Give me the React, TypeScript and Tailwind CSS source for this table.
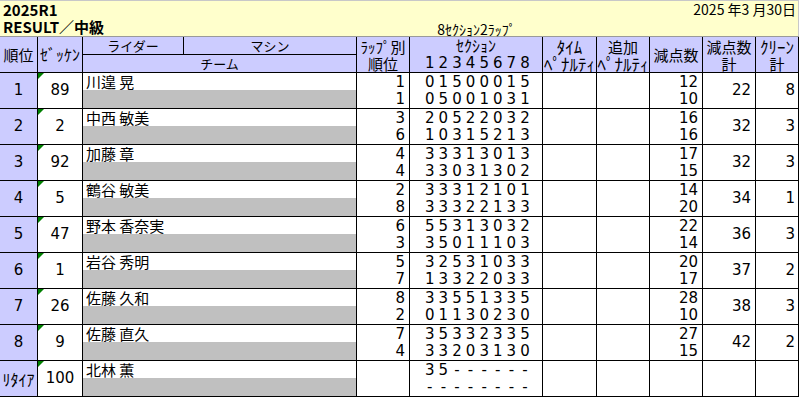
import React from "react";

// one grid template shared by the title, header and result rows
const COLS =
  "grid grid-cols-[38px_45px_101px_173px_53px_133px_54px_53px_53px_53px_43px]";
const JP = "font-['Noto_Sans_CJK_JP',sans-serif]";
const NUM = "font-['DejaVu_Sans','Noto_Sans_CJK_JP',sans-serif]";

interface Result {
  rank: string;
  no: string;
  name: string;
  laps: [string, string];
  sections: [string, string];
  points: [string, string];
  total: string;
  clean: string;
}

const results: Result[] = [
  { rank: "1", no: "89", name: "川遑 晃", laps: ["1", "1"], sections: ["01500015", "05001031"], points: ["12", "10"], total: "22", clean: "8" },
  { rank: "2", no: "2", name: "中西 敏美", laps: ["3", "6"], sections: ["20522032", "10315213"], points: ["16", "16"], total: "32", clean: "3" },
  { rank: "3", no: "92", name: "加藤 章", laps: ["4", "4"], sections: ["33313013", "33031302"], points: ["17", "15"], total: "32", clean: "3" },
  { rank: "4", no: "5", name: "鶴谷 敏美", laps: ["2", "8"], sections: ["33312101", "33322133"], points: ["14", "20"], total: "34", clean: "1" },
  { rank: "5", no: "47", name: "野本 香奈実", laps: ["6", "3"], sections: ["55313032", "35011103"], points: ["22", "14"], total: "36", clean: "3" },
  { rank: "6", no: "1", name: "岩谷 秀明", laps: ["5", "7"], sections: ["32531033", "13322033"], points: ["20", "17"], total: "37", clean: "2" },
  { rank: "7", no: "26", name: "佐藤 久和", laps: ["8", "2"], sections: ["33551335", "01130230"], points: ["28", "10"], total: "38", clean: "3" },
  { rank: "8", no: "9", name: "佐藤 直久", laps: ["7", "4"], sections: ["35332335", "33203130"], points: ["27", "15"], total: "42", clean: "2" },
  { rank: "ﾘﾀｲｱ", no: "100", name: "北林 薫", laps: ["", ""], sections: ["35------", "--------"], points: ["", ""], total: "", clean: "" },
];

const Digits = ({ value }: { value: string }) => (
  <div className="flex pl-[13px]">
    {value.split("").map((d, i) => (
      <span key={i} className="w-[13.6px] text-center">
        {d}
      </span>
    ))}
  </div>
);

const cell = "border-r border-b border-black";

// header cell; each line gets its own 18px slot and font size
const HeaderCell = ({
  pos,
  lines,
}: {
  pos: string;
  lines: [string, string][];
}) => (
  <div className={`${pos} ${cell} bg-[#ccccff] flex flex-col items-center justify-center`}>
    {lines.map(([text, size], i) => (
      <span key={i} className={`whitespace-nowrap h-[17px] leading-[17px] ${size}`}>
        {text}
      </span>
    ))}
  </div>
);

const Row = ({ r }: { r: Result }) => {
  const retired = r.rank === "ﾘﾀｲｱ";
  return (
    <div className={`${COLS} h-[36px]`}>
      <div
        className={`${cell} bg-[#ccccff] flex items-center justify-center ${
          retired ? `${JP} text-[16px]` : `${NUM} text-[15px]`
        }`}
      >
        {r.rank}
      </div>
      <div className={`${cell} relative flex items-center justify-center ${NUM} text-[15px]`}>
        <span className="absolute left-0 top-0 w-0 h-0 border-t-[6px] border-r-[6px] border-t-[#008000] border-r-transparent" />
        {r.no}
      </div>
      <div className={`${cell} col-span-2 flex flex-col`}>
        <div className={`h-[17px] leading-[17px] pl-[3px] text-[15px] ${JP}`}>{r.name}</div>
        <div className="flex-1 bg-[#c0c0c0]" />
      </div>
      <div className={`${cell} flex flex-col text-right pr-[4px] ${NUM} text-[15px] leading-[18px]`}>
        <span className="h-[17px]">{r.laps[0]}</span>
        <span>{r.laps[1]}</span>
      </div>
      <div className={`${cell} flex flex-col ${NUM} text-[15px] leading-[18px]`}>
        <div className="h-[17px]">
          <Digits value={r.sections[0]} />
        </div>
        <Digits value={r.sections[1]} />
      </div>
      <div className={cell} />
      <div className={cell} />
      <div className={`${cell} flex flex-col text-right pr-[4px] ${NUM} text-[15px] leading-[18px]`}>
        <span className="h-[17px]">{r.points[0]}</span>
        <span>{r.points[1]}</span>
      </div>
      <div className={`${cell} flex items-center justify-end pr-[4px] ${NUM} text-[15px]`}>
        {r.total}
      </div>
      <div className={`${cell} flex items-center justify-end pr-[3px] ${NUM} text-[15px]`}>
        {r.clean}
      </div>
    </div>
  );
};

export default function App() {
  return (
    <div className={`w-[800px] h-[397px] bg-white text-black overflow-hidden ${JP}`}>
      {/* title block */}
      <div className="w-[799px] h-[36px] bg-[#ffffcc] border-t border-r border-[#c8c8c8]">
        <div className="flex justify-between h-[17px] leading-[17px]">
          <span className="pl-[3px] text-[15px] font-bold">2025R1</span>
          <span className="pr-[2px] text-[14px]">2025 年3 月30日</span>
        </div>
        <div className={`${COLS} h-[18px]`}>
          <div className="col-span-5 pl-[3px] text-[15px] font-bold leading-[18px]">RESULT／中級</div>
          <div className="text-center text-[14px] leading-[14px] self-end whitespace-nowrap">8ｾｸｼｮﾝ2ﾗｯﾌﾟ</div>
        </div>
      </div>

      {/* column headers */}
      <div className={`${COLS} grid-rows-[18px_18px] w-[799px] border-t border-[#9a9a9a]`}>
        <HeaderCell pos="col-start-1 row-start-1 row-span-2" lines={[["順位", "text-[15px]"]]} />
        <HeaderCell pos="col-start-2 row-start-1 row-span-2" lines={[["ｾﾞｯｹﾝ", "text-[16px]"]]} />
        <HeaderCell pos="col-start-3 row-start-1" lines={[["ライダー", "text-[13px]"]]} />
        <HeaderCell pos="col-start-4 row-start-1" lines={[["マシン", "text-[13px]"]]} />
        <HeaderCell pos="col-start-3 row-start-2 col-span-2" lines={[["チーム", "text-[13px]"]]} />
        <HeaderCell
          pos="col-start-5 row-start-1 row-span-2"
          lines={[
            ["ﾗｯﾌﾟ別", "text-[15px]"],
            ["順位", "text-[15px]"],
          ]}
        />
        <div className={`col-start-6 row-start-1 row-span-2 ${cell} bg-[#ccccff] flex flex-col`}>
          <span className="text-center text-[16px] h-[17px] leading-[17px]">ｾｸｼｮﾝ</span>
          <div className={`${NUM} text-[15px] leading-[18px]`}>
            <Digits value="12345678" />
          </div>
        </div>
        <HeaderCell
          pos="col-start-7 row-start-1 row-span-2"
          lines={[
            ["ﾀｲﾑ", "text-[17px]"],
            ["ﾍﾟﾅﾙﾃｨ", "text-[17px]"],
          ]}
        />
        <HeaderCell
          pos="col-start-8 row-start-1 row-span-2"
          lines={[
            ["追加", "text-[15px]"],
            ["ﾍﾟﾅﾙﾃｨ", "text-[17px]"],
          ]}
        />
        <HeaderCell pos="col-start-9 row-start-1 row-span-2" lines={[["減点数", "text-[15px]"]]} />
        <HeaderCell
          pos="col-start-10 row-start-1 row-span-2"
          lines={[
            ["減点数", "text-[15px]"],
            ["計", "text-[15px]"],
          ]}
        />
        <HeaderCell
          pos="col-start-11 row-start-1 row-span-2"
          lines={[
            ["ｸﾘｰﾝ", "text-[17px]"],
            ["計", "text-[15px]"],
          ]}
        />
      </div>

      {results.map((r) => (
        <Row key={r.no} r={r} />
      ))}
    </div>
  );
}
